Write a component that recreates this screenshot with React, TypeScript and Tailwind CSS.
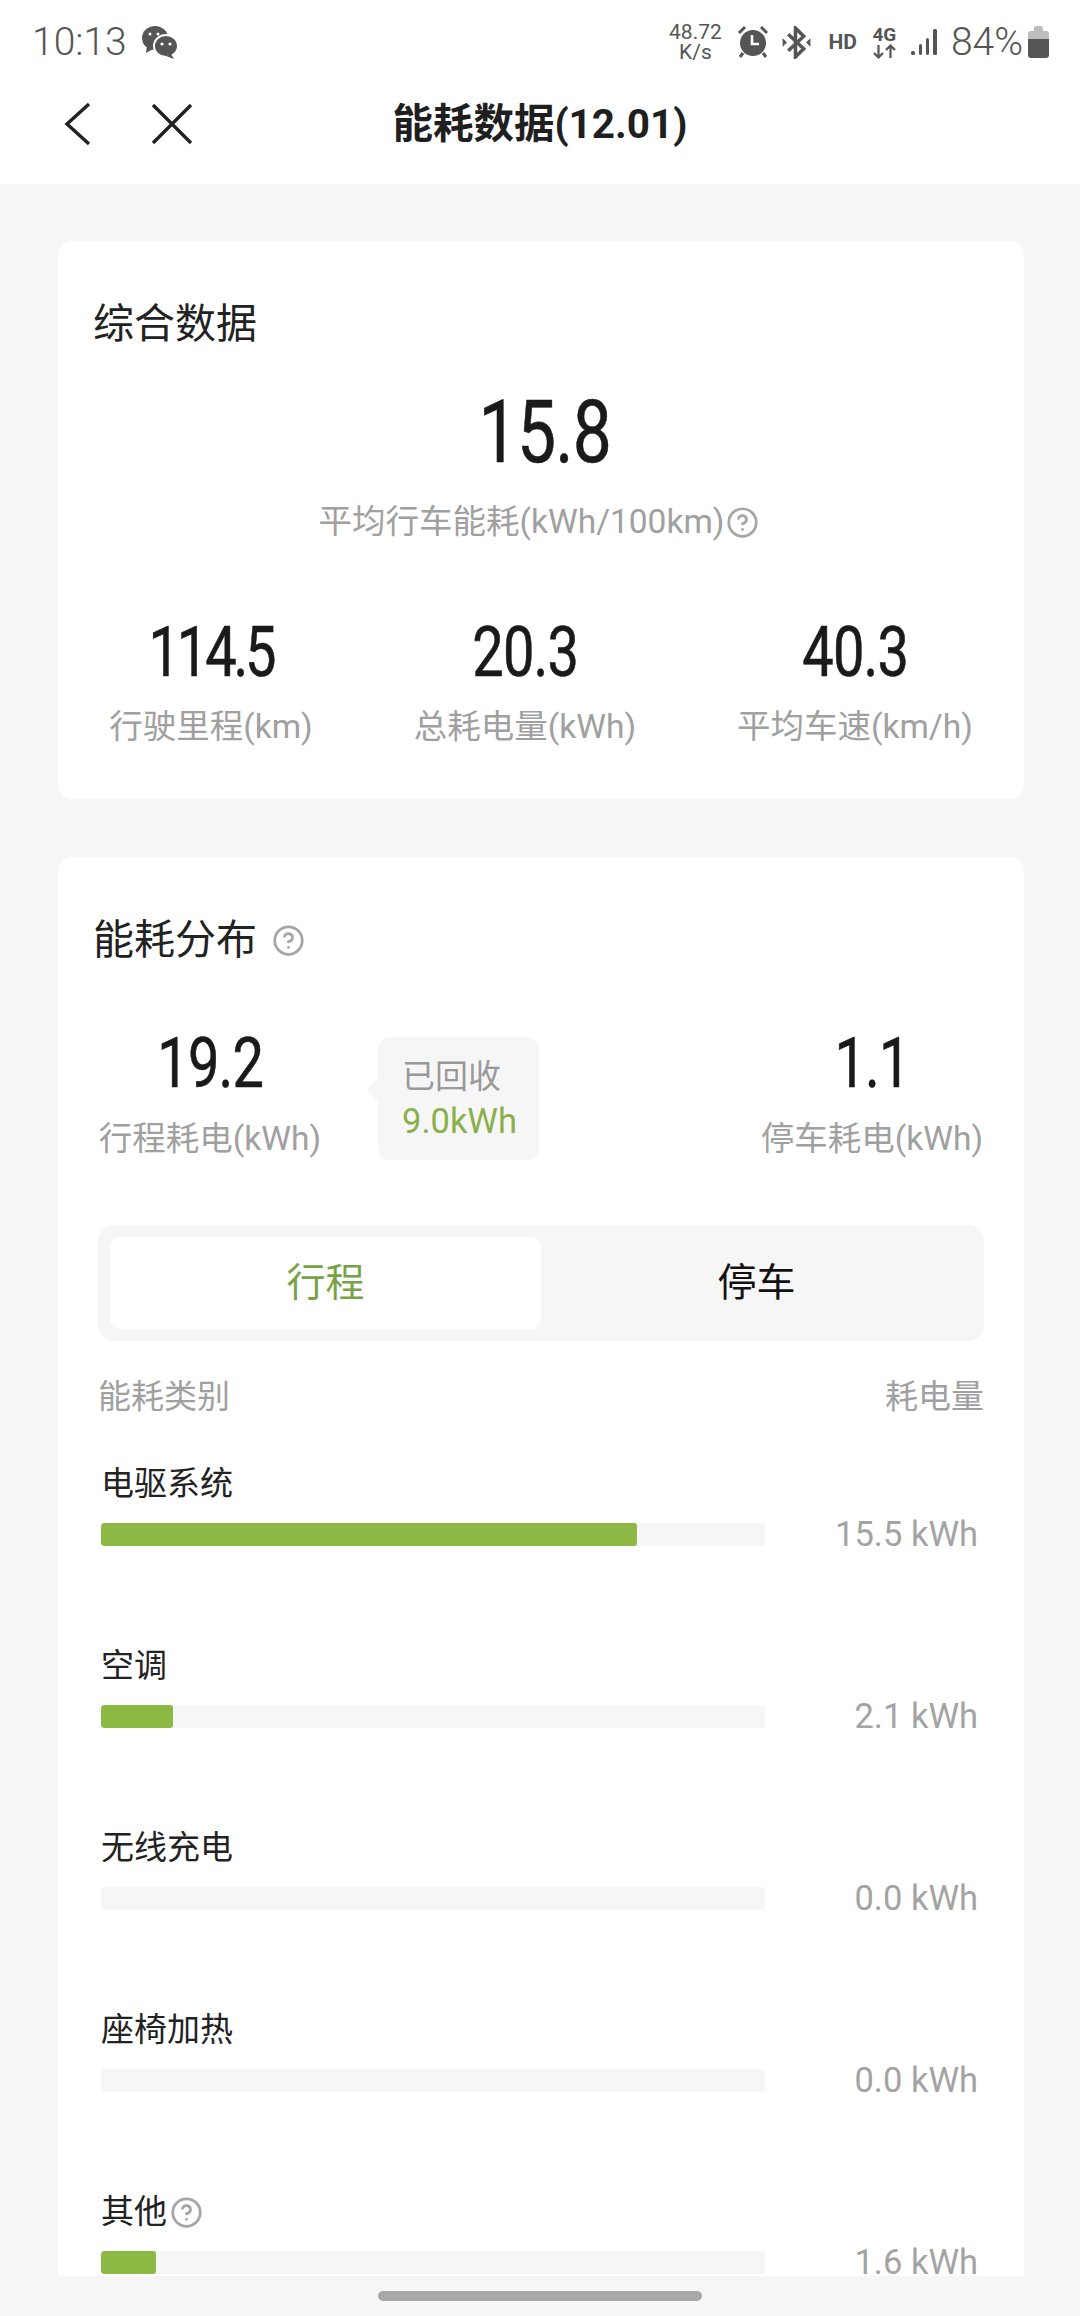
import { CircleHelp } from "lucide-react";

const rows = [
  { name: "电驱系统", fill: 536, value: "15.5 kWh" },
  { name: "空调", fill: 72, value: "2.1 kWh" },
  { name: "无线充电", fill: 0, value: "0.0 kWh" },
  { name: "座椅加热", fill: 0, value: "0.0 kWh" },
  { name: "其他", fill: 55, value: "1.6 kWh", help: true },
];

const stats = [
  { value: "114.5", label: "行驶里程(km)", tight: true },
  { value: "20.3", label: "总耗电量(kWh)" },
  { value: "40.3", label: "平均车速(km/h)" },
];

function Help() {
  return <CircleHelp size={33} strokeWidth={2} className="shrink-0 text-[#a6a6a6]" />;
}

// the digits in the picture are much narrower than any installed face
function Num({ children, tight }: { children: string; tight?: boolean }) {
  return (
    <div className={`inline-block origin-center scale-x-[0.8] text-[70px] leading-[60px] text-[#1a1a1a] [-webkit-text-stroke:0.6px_#1a1a1a] ${tight ? "tracking-[-4px]" : "tracking-[-1px]"}`}>
      {children}
    </div>
  );
}

function StatusBar() {
  return (
    <div className="flex h-[84px] items-center justify-between pl-[32px] pr-[31px] text-[#555]">
      <div className="flex items-center gap-[14px]">
        <span className="text-[39px] leading-none font-light">10:13</span>
        <svg width="38" height="34" viewBox="0 0 38 34" fill="#555">
          <ellipse cx="14" cy="13" rx="13" ry="12" />
          <path d="M6 21 L5 28 L12 24 Z" />
          <ellipse cx="25" cy="21" rx="12" ry="11" stroke="#fff" strokeWidth="2" />
          <path d="M30 29 L33 34 L25 31 Z" />
          <circle cx="21" cy="19" r="1.6" fill="#fff" />
          <circle cx="29" cy="19" r="1.6" fill="#fff" />
          <circle cx="9" cy="9" r="1.5" fill="#fff" />
          <circle cx="17" cy="9" r="1.5" fill="#fff" />
        </svg>
      </div>
      <div className="flex items-center">
        <div className="flex w-[56px] flex-col items-center text-[21px] leading-[20px]">
          <span>48.72</span>
          <span>K/s</span>
        </div>
        <svg className="ml-[14px]" width="32" height="34" viewBox="0 0 32 34" fill="#555">
          <circle cx="16" cy="18" r="13" />
          <path d="M2 8 L8 2 M30 8 L24 2 M6 28 L3 32 M26 28 L29 32" stroke="#555" strokeWidth="3" />
          <path d="M15 10 V19 H22" stroke="#fff" strokeWidth="2.6" fill="none" />
        </svg>
        <svg className="ml-[13px]" width="29" height="33" viewBox="0 0 28 32" fill="none" stroke="#555" strokeWidth="3.4">
          <path d="M6 8 L21 22 L13 30 V2 L21 10 L6 24" />
          <path d="M1 13 L4 16 L1 19 Z M27 13 L24 16 L27 19 Z" fill="#555" strokeWidth="1" />
        </svg>
        <span className="ml-[17px] text-[21px] leading-none font-bold">HD</span>
        <div className="ml-[14px] flex w-[27px] flex-col items-center">
          <span className="text-[19px] leading-[18px] font-bold">4G</span>
          <svg width="25" height="15" viewBox="0 0 24 15" fill="none" stroke="#555" strokeWidth="2.2">
            <path d="M6 1 V13 M1.5 9 L6 13.5 L10.5 9" />
            <path d="M18 14 V2 M13.5 6 L18 1.5 L22.5 6" />
          </svg>
        </div>
        <svg className="ml-[13px]" width="28" height="28" viewBox="0 0 28 28" fill="#555">
          <rect x="0" y="23" width="4" height="4" rx="1.5" />
          <rect x="8" y="16" width="3" height="11" rx="1.5" />
          <rect x="15" y="10" width="3" height="17" rx="1.5" />
          <rect x="22" y="1" width="4" height="26" rx="1.5" />
        </svg>
        <span className="ml-[12px] text-[39px] leading-none font-light">84%</span>
        <div className="ml-[5px] flex w-[21px] flex-col items-center">
          <div className="h-[5px] w-[9px] rounded-t-[2px] bg-[#bdbdbd]" />
          <div className="h-[8px] w-[21px] rounded-t-[3px] bg-[#bdbdbd]" />
          <div className="h-[19px] w-[21px] rounded-b-[3px] bg-[#555]" />
        </div>
      </div>
    </div>
  );
}

function Header() {
  return (
    <div className="grid h-[100px] grid-cols-[1fr_auto_1fr] items-center bg-white pb-[20px]">
      <div className="flex items-center pl-[62px]">
        <svg width="30" height="44" viewBox="0 0 30 44" fill="none" stroke="#222" strokeWidth="3.4">
          <path d="M27 2 L5 22 L27 42" />
        </svg>
        <svg className="ml-[58px]" width="44" height="44" viewBox="0 0 44 44" fill="none" stroke="#222" strokeWidth="3.4">
          <path d="M3 3 L41 41 M41 3 L3 41" />
        </svg>
      </div>
      <div className="text-[40.5px] leading-[48px] font-bold text-[#1f1f1f]">能耗数据(12.01)</div>
      <div />
    </div>
  );
}

function Row({ name, fill, value, help }: { name: string; fill: number; value: string; help?: boolean }) {
  return (
    <div className="h-[182px] shrink-0 pl-[3px] pr-[6px]">
      <div className="flex h-[40px] items-center gap-[3px] text-[33px] leading-[40px] text-[#222]">
        {name}
        {help && <Help />}
      </div>
      <div className="mt-[10px] flex h-[40px] items-center justify-between">
        <div className="h-[23px] w-[664px] overflow-hidden rounded-[3px] bg-[#f6f6f6]">
          <div className="h-full rounded-[3px] bg-[#8bb944]" style={{ width: fill }} />
        </div>
        <span className="text-[34.5px] leading-[30px] text-[#a3a3a3]">{value}</span>
      </div>
    </div>
  );
}

export default function App() {
  return (
    <div className="flex h-[2316px] w-[1080px] flex-col overflow-hidden bg-[#f6f6f6] font-[Roboto,'Noto_Sans_CJK_SC',sans-serif]">
      <div className="bg-white">
        <StatusBar />
        <Header />
      </div>

      <div className="flex-1 overflow-hidden pl-[58px] pr-[56px] pt-[57px]">
        <section className="h-[558px] rounded-[14px] bg-white pt-[59px]">
          <h2 className="pl-[35px] text-[41px] leading-[48px] text-[#222]">综合数据</h2>
          <div className="mt-[44px] pl-[8px] text-center">
            <div className="inline-block origin-center scale-x-[0.8] text-[87px] leading-[80px] tracking-[-1px] text-[#1a1a1a] [-webkit-text-stroke:0.6px_#1a1a1a]">15.8</div>
          </div>
          <div className="mt-[30px] flex items-center justify-center gap-[2px] pr-[4px] text-[33.5px] leading-[40px] text-[#a0a0a0]">
            平均行车能耗(kWh/100km)
            <Help />
          </div>
          <div className="mt-[80px] grid grid-cols-[306px_322px_338px] text-center">
            {stats.map((s) => (
              <div key={s.label}>
                <Num tight={s.tight}>{s.value}</Num>
                <div className="mt-[24px] whitespace-nowrap text-[33.5px] leading-[40px] text-[#a0a0a0]">{s.label}</div>
              </div>
            ))}
          </div>
        </section>

        <section className="mt-[58px] rounded-[14px] bg-white px-[40px] pt-[59px]">
          <div className="-ml-[5px] flex items-center gap-[15px]">
            <h2 className="text-[41px] leading-[48px] text-[#222]">能耗分布</h2>
            <Help />
          </div>

          <div className="mt-[73px] flex h-[123px]">
            <div className="w-[224px] text-center">
              <div className="-mt-[4px]">
                <Num>19.2</Num>
              </div>
              <div className="mt-[25px] whitespace-nowrap text-[33.5px] leading-[40px] text-[#a0a0a0]">行程耗电(kWh)</div>
            </div>
            <div className="relative ml-[56px] h-[123px] w-[161px] rounded-[12px] bg-[#f6f6f6] pl-[24px] pt-[20px]">
              <div className="absolute -left-[8px] top-[44px] h-[18px] w-[18px] rotate-45 bg-[#f6f6f6]" />
              <div className="relative text-[33px] leading-[40px] text-[#999]">已回收</div>
              <div className="relative mt-[4px] text-[34.5px] leading-[40px] text-[#8ab04c]">9.0kWh</div>
            </div>
            <div className="ml-auto w-[224px] text-center">
              <div className="-mt-[4px]">
                <Num>1.1</Num>
              </div>
              <div className="mt-[25px] whitespace-nowrap text-[33.5px] leading-[40px] text-[#a0a0a0]">停车耗电(kWh)</div>
            </div>
          </div>

          <div className="mt-[65px] grid h-[116px] grid-cols-2 rounded-[16px] bg-[#f6f6f6] p-[12px]">
            <div className="flex items-center justify-center rounded-[10px] bg-white text-[39px] text-[#77a345]">行程</div>
            <div className="flex items-center justify-center text-[39px] text-[#111]">停车</div>
          </div>

          <div className="mt-[36px] flex justify-between text-[33px] leading-[40px] text-[#a0a0a0]">
            <span>能耗类别</span>
            <span>耗电量</span>
          </div>

          <div className="mt-[47px]">
            {rows.map((r) => (
              <Row key={r.name} {...r} />
            ))}
          </div>
        </section>
      </div>

      <div className="flex h-[40px] shrink-0 justify-center bg-[#f6f6f6] pt-[15px]">
        <div className="h-[10px] w-[324px] rounded-full bg-[#a8a8a8]" />
      </div>
    </div>
  );
}
